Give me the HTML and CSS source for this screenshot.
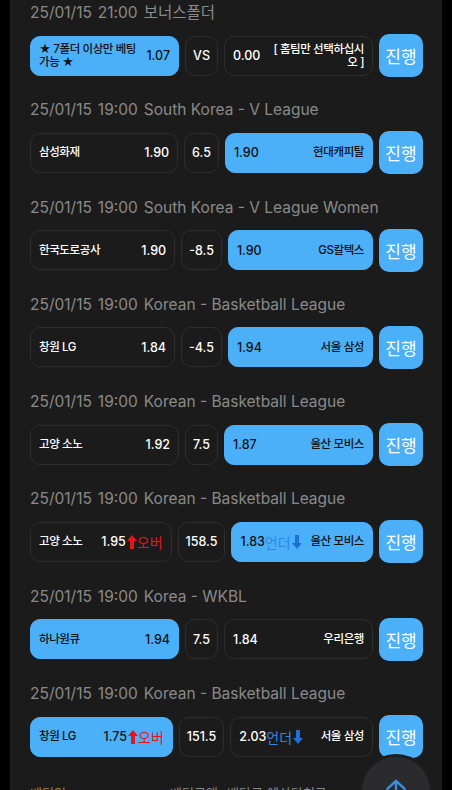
FILE: index.html
```html
<!DOCTYPE html>
<html lang="ko">

<head>
    <meta charset="UTF-8">
    <meta name="viewport" content="width=device-width, initial-scale=1.0">
    <title>Bet list</title>
    <link rel="stylesheet" href="styles.css">
</head>

<body>
    <div class="panel">

        <div class="game">
            <div class="game-head"><span>25/01/15</span><span>21:00</span><span>보너스폴더</span></div>
            <div class="game-row">
                <div class="pick home on">
                    <span class="team multi">★ 7폴더 이상만 베팅 가능 ★</span>
                    <span class="odds">1.07</span>
                </div>
                <div class="mid">VS</div>
                <div class="pick away">
                    <span class="odds">0.00</span>
                    <span class="team wrap">[ 홈팀만 선택하십시오 ]</span>
                </div>
                <button class="go">진행</button>
            </div>
        </div>

        <div class="game">
            <div class="game-head"><span>25/01/15</span><span>19:00</span><span>South Korea - V League</span></div>
            <div class="game-row">
                <div class="pick home">
                    <span class="team">삼성화재</span>
                    <span class="odds">1.90</span>
                </div>
                <div class="mid">6.5</div>
                <div class="pick away on">
                    <span class="odds">1.90</span>
                    <span class="team">현대캐피탈</span>
                </div>
                <button class="go">진행</button>
            </div>
        </div>

        <div class="game">
            <div class="game-head"><span>25/01/15</span><span>19:00</span><span>South Korea - V League Women</span></div>
            <div class="game-row">
                <div class="pick home">
                    <span class="team">한국도로공사</span>
                    <span class="odds">1.90</span>
                </div>
                <div class="mid">-8.5</div>
                <div class="pick away on">
                    <span class="odds">1.90</span>
                    <span class="team">GS칼텍스</span>
                </div>
                <button class="go">진행</button>
            </div>
        </div>

        <div class="game">
            <div class="game-head"><span>25/01/15</span><span>19:00</span><span>Korean - Basketball League</span></div>
            <div class="game-row">
                <div class="pick home">
                    <span class="team">창원 LG</span>
                    <span class="odds">1.84</span>
                </div>
                <div class="mid">-4.5</div>
                <div class="pick away on">
                    <span class="odds">1.94</span>
                    <span class="team">서울 삼성</span>
                </div>
                <button class="go">진행</button>
            </div>
        </div>

        <div class="game">
            <div class="game-head"><span>25/01/15</span><span>19:00</span><span>Korean - Basketball League</span></div>
            <div class="game-row">
                <div class="pick home">
                    <span class="team">고양 소노</span>
                    <span class="odds">1.92</span>
                </div>
                <div class="mid">7.5</div>
                <div class="pick away on">
                    <span class="odds">1.87</span>
                    <span class="team">울산 모비스</span>
                </div>
                <button class="go">진행</button>
            </div>
        </div>

        <div class="game">
            <div class="game-head"><span>25/01/15</span><span>19:00</span><span>Korean - Basketball League</span></div>
            <div class="game-row">
                <div class="pick home">
                    <span class="team">고양 소노</span>
                    <span class="odds">1.95<svg class="arw up" viewBox="0 0 10 14"><path d="M5 0 L10 6 H7 V14 H3 V6 H0 Z" /></svg><em class="over">오버</em></span>
                </div>
                <div class="mid">158.5</div>
                <div class="pick away on">
                    <span class="odds">1.83<em class="under">언더</em><svg class="arw down" viewBox="0 0 10 14"><path d="M5 14 L10 8 H7 V0 H3 V8 H0 Z" /></svg></span>
                    <span class="team">울산 모비스</span>
                </div>
                <button class="go">진행</button>
            </div>
        </div>

        <div class="game">
            <div class="game-head"><span>25/01/15</span><span>19:00</span><span>Korea - WKBL</span></div>
            <div class="game-row">
                <div class="pick home on">
                    <span class="team">하나원큐</span>
                    <span class="odds">1.94</span>
                </div>
                <div class="mid">7.5</div>
                <div class="pick away">
                    <span class="odds">1.84</span>
                    <span class="team">우리은행</span>
                </div>
                <button class="go">진행</button>
            </div>
        </div>

        <div class="game">
            <div class="game-head"><span>25/01/15</span><span>19:00</span><span>Korean - Basketball League</span></div>
            <div class="game-row">
                <div class="pick home on">
                    <span class="team">창원 LG</span>
                    <span class="odds">1.75<svg class="arw up" viewBox="0 0 10 14"><path d="M5 0 L10 6 H7 V14 H3 V6 H0 Z" /></svg><em class="over">오버</em></span>
                </div>
                <div class="mid">151.5</div>
                <div class="pick away">
                    <span class="odds">2.03<em class="under">언더</em><svg class="arw down" viewBox="0 0 10 14"><path d="M5 14 L10 8 H7 V0 H3 V8 H0 Z" /></svg></span>
                    <span class="team">서울 삼성</span>
                </div>
                <button class="go">진행</button>
            </div>
        </div>

        <div class="slip-head">
            <span class="c-date">베팅일</span>
            <span class="c-amt">베팅금액</span>
            <span class="c-rate">배당금</span>
            <span class="c-win">예상당첨금</span>
        </div>
    </div>

    <button class="to-top">
        <svg viewBox="0 0 24 24">
            <path d="M12 21 V4 M4 11 L12 3.5 L20 11" />
        </svg>
    </button>
</body>

</html>
```

FILE: styles.css
```css
* {
    box-sizing: border-box;
}

body {
    margin: 0;
    background-color: #000;
    color: #fff;
    font-family: Inter, "Noto Sans CJK KR", sans-serif;
    overflow: hidden;
}

.panel {
    margin: 0 10px;
    padding: 3px 19px 0 20px;
    background-color: #1b1b1b;
    min-height: 800px;
}

.game {
    padding-bottom: 23.3px;
}

.game-head {
    height: 20px;
    line-height: 20px;
    font-size: 15.5px;
    color: #8a8a8a;
    margin-bottom: 11px;
    white-space: nowrap;
}

.game-head span {
    margin-right: 6px;
}

.game-row {
    display: flex;
    align-items: center;
    gap: 6px;
    height: 43px;
}

.pick {
    flex: 1;
    min-width: 0;
    height: 40px;
    display: flex;
    align-items: center;
    justify-content: space-between;
    gap: 6px;
    padding: 0 8px;
    border: 1px solid #2e2e2e;
    border-radius: 10px;
    background-color: #1b1b1b;
    font-weight: 500;
    color: #fff;
}

.pick.on {
    background-color: #4cb0f9;
    border-color: #4cb0f9;
    color: #111;
}

.team {
    font-size: 11.5px;
    letter-spacing: -0.4px;
    line-height: 13px;
    white-space: nowrap;
}

.team.multi {
    white-space: normal;
    word-break: keep-all;
}

.team.wrap {
    white-space: normal;
    text-align: right;
    width: 92px;
}

.odds {
    display: flex;
    align-items: center;
    font-size: 12.5px;
    white-space: nowrap;
}

.mid {
    height: 40px;
    padding: 0 7px;
    display: flex;
    align-items: center;
    border: 1px solid #2e2e2e;
    border-radius: 10px;
    font-size: 12.5px;
    font-weight: 500;
}

.go {
    width: 44px;
    height: 43px;
    flex: none;
    border: none;
    border-radius: 10px;
    background-color: #4cb0f9;
    color: #fff;
    font-family: inherit;
    font-size: 17px;
    font-weight: 400;
    padding: 0;
}

.arw {
    width: 10px;
    height: 14px;
    margin-left: 1px;
}

.arw.up {
    fill: #e8141b;
}

.arw.down {
    fill: #1f6fd8;
}

em {
    font-style: normal;
    font-size: 14px;
    font-weight: 400;
}

.over {
    color: #e8141b;
}

.under {
    color: #2f86ea;
}

.slip-head {
    display: flex;
    padding-top: 2px;
    font-size: 13px;
    color: #8a8a8a;
}

.c-date {
    color: #a8862c;
    width: 140px;
}

.c-amt {
    width: 57px;
}

.c-rate {
    width: 40px;
}

.to-top {
    position: fixed;
    right: 19px;
    bottom: -38px;
    width: 74px;
    height: 74px;
    border-radius: 50%;
    border: 3px solid #1d1d1d;
    background-color: #2b2b2d;
    padding: 0;
    display: flex;
    justify-content: center;
    padding-top: 20px;
}

.to-top svg {
    width: 26px;
    height: 26px;
    fill: none;
    stroke: #3c8fe0;
    stroke-width: 2.2;
    stroke-linecap: round;
    stroke-linejoin: round;
}
```
